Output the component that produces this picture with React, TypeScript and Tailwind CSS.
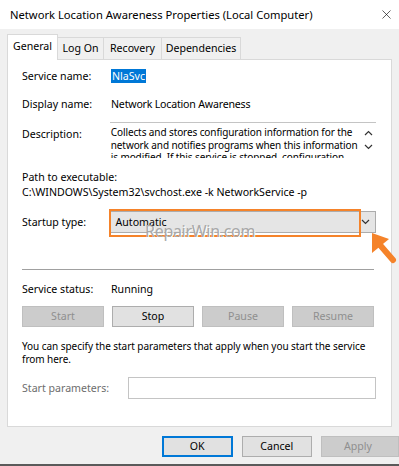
import { X } from 'lucide-react';

const font = { fontFamily: '"Noto Sans", "Liberation Sans", sans-serif' };

function Chevron({ up = false }: { up?: boolean }) {
  return (
    <svg width="9" height="6" viewBox="0 0 9 6" className="block">
      <path
        d={up ? 'M1 5 L4.5 1.5 L8 5' : 'M1 1 L4.5 4.5 L8 1'}
        fill="none"
        stroke="#333"
        strokeWidth="1.2"
      />
    </svg>
  );
}

function Tab({ label, width, active = false }: { label: string; width: string; active?: boolean }) {
  if (active) {
    return (
      <div className={`relative z-10 -mb-px flex h-[26px] items-center justify-center border border-b-0 border-[#d9d9d9] bg-white pb-[2px] ${width}`}>
        {label}
      </div>
    );
  }
  return (
    <div className={`-ml-px flex h-[22px] items-center justify-center border border-b-0 border-[#d9d9d9] bg-[#f0f0f0] ${width}`}>
      {label}
    </div>
  );
}

function ActionButton({ label, disabled = false }: { label: string; disabled?: boolean }) {
  return (
    <div
      className={`flex h-[21px] w-[82px] items-center justify-center border ${
        disabled ? 'border-[#bfbfbf] bg-[#cccccc] text-[#8f8f8f]' : 'border-[#adadad] bg-[#e1e1e1] text-black'
      }`}
    >
      {label}
    </div>
  );
}

export default function App() {
  return (
    <div
      className="relative h-[466px] w-[399px] overflow-hidden bg-[#f0f0f0] text-[10.6px] leading-[15px] text-black"
      style={font}
    >
      {/* title bar */}
      <div className="flex h-[29px] items-center justify-between bg-white pl-[10px] pr-[5px] text-[11.2px]">
        <span>Network Location Awareness Properties (Local Computer)</span>
        <X size={15} strokeWidth={1} />
      </div>

      {/* tabs */}
      <div className="flex items-end pl-[7px] pt-[5px]">
        <Tab label="General" width="w-[51px]" active />
        <Tab label="Log On" width="w-[47px]" />
        <Tab label="Recovery" width="w-[59px]" />
        <Tab label="Dependencies" width="w-[80px]" />
      </div>

      {/* panel */}
      <div className="mx-[7px] h-[368px] border border-[#d9d9d9] bg-white pl-[14px] pr-[15px]">
        <div className="mt-[8px] flex h-[16px] items-center">
          <span className="w-[89px]">Service name:</span>
          <span className="bg-[#0078d7] px-[1px] leading-[14px] text-white">NlaSvc</span>
        </div>
        <div className="mt-[12px] flex h-[16px] items-center">
          <span className="w-[89px]">Display name:</span>
          <span className="tracking-[-0.2px]">Network Location Awareness</span>
        </div>
        <div className="mt-[10px] flex items-start">
          <span className="mt-[5px] w-[88px]">Description:</span>
          <div className="relative flex h-[36px] w-[267px] overflow-hidden border-t border-[#c4c4c4] pl-[1px] text-[10px] leading-[12.5px] tracking-[-0.1px]">
            <div className="w-[250px] whitespace-nowrap pt-[3px]">
              Collects and stores configuration information for the
              <br />
              network and notifies programs when this information
              <br />
              is modified. If this service is stopped, configuration
            </div>
            <div className="flex flex-1 flex-col items-center gap-[8px] pt-[7px]">
              <Chevron up />
              <Chevron />
            </div>
          </div>
        </div>
        <div className="mt-[12px]">
          <div>Path to executable:</div>
          <div>C:\WINDOWS\System32\svchost.exe -k NetworkService -p</div>
        </div>
        <div className="mt-[11px] flex h-[22px] items-center">
          <span className="w-[88px]">Startup type:</span>
          <div className="relative flex h-[22px] w-[268px] items-center border border-[#acacac] bg-[#e5e5e5]">
            <span className="flex-1 pl-[5px]">Automatic</span>
            <div className="flex w-[19px] items-center justify-center">
              <Chevron />
            </div>
            <div className="absolute -left-[2px] -top-[3px] h-[28px] w-[252px] border-2 border-[#f5832a]" />
          </div>
        </div>
        <div className="mt-[36px] h-[2px] w-[352px] border-t border-b border-t-[#a0a0a0] border-b-white" />
        <div className="mt-[10px] flex h-[16px] items-center">
          <span className="w-[89px]">Service status:</span>
          <span>Running</span>
        </div>
        <div className="mt-[9px] flex gap-[8px]">
          <ActionButton label="Start" disabled />
          <ActionButton label="Stop" />
          <ActionButton label="Pause" disabled />
          <ActionButton label="Resume" disabled />
        </div>
        <div className="mt-[13px] whitespace-nowrap text-[10px] leading-[12.5px] tracking-[-0.05px]">
          You can specify the start parameters that apply when you start the service
          <br />
          from here.
        </div>
        <div className="mt-[12px] flex h-[22px] items-center">
          <span className="w-[107px] text-[#6d6d6d]">Start parameters:</span>
          <div className="h-[22px] w-[249px] border border-[#c4c4c4] bg-white" />
        </div>
      </div>

      {/* dialog buttons */}
      <div className="mt-[9px] flex gap-[9px] pl-[162px]">
        <div className="flex h-[21px] w-[72px] items-center justify-center border-2 border-[#0078d7] bg-[#e1e1e1]">OK</div>
        <div className="flex h-[21px] w-[72px] items-center justify-center border border-[#adadad] bg-[#e1e1e1]">Cancel</div>
        <div className="flex h-[21px] w-[78px] shrink-0 items-center justify-center border border-[#bfbfbf] bg-[#cccccc] pr-[4px] text-[#8f8f8f]">
          Apply
        </div>
      </div>
      <div className="absolute bottom-0 left-0 h-[2px] w-full bg-[#5a5a5a]" />

      {/* watermark */}
      <div className="absolute left-[145px] top-[224px] text-[16px] tracking-[-0.3px] text-[#a8a8a8] [text-shadow:1px_1px_0_#ffffff]">
        RepairWin.com
      </div>

      {/* orange pointer */}
      <svg className="absolute left-[362px] top-[226px]" width="37" height="40" viewBox="0 0 37 40">
        <line x1="31" y1="34" x2="18" y2="19" stroke="#f5832a" strokeWidth="6" strokeLinecap="round" />
        <polygon points="10,7 10,27 27,13" fill="#f5832a" />
      </svg>
    </div>
  );
}
